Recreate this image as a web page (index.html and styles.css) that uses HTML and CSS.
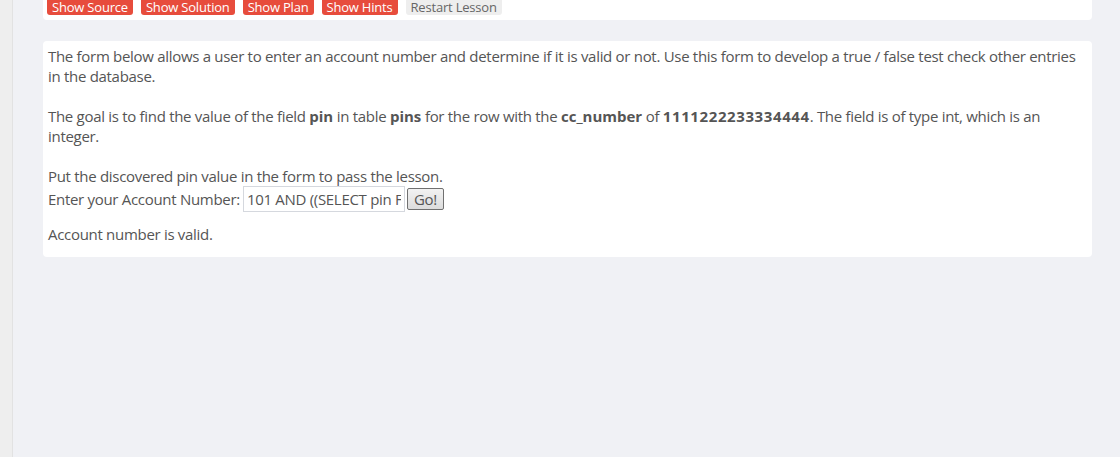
FILE: index.html
```html
<!DOCTYPE html>
<html>
<head>
<meta charset="utf-8">
<link rel="stylesheet" href="styles.css">
</head>
<body>
<div class="layout">
  <aside class="sidebar"></aside>
  <main class="main">
    <div class="card toolbar">
      <span class="btn btn-red">Show Source</span>
      <span class="btn btn-red">Show Solution</span>
      <span class="btn btn-red">Show Plan</span>
      <span class="btn btn-red">Show Hints</span>
      <span class="btn btn-gray">Restart Lesson</span>
    </div>
    <div class="card lesson">
      <p>The form below allows a user to enter an account number and determine if it is valid or not. Use this form to develop a true / false test check other entries in the database.</p>
      <p>The goal is to find the value of the field <b>pin</b> in table <b>pins</b> for the row with the <b>cc_number</b> of <b class="num">1111222233334444</b>. The field is of type int, which is an integer.</p>
      <p class="tight">Put the discovered pin value in the form to pass the lesson.</p>
      <form class="form-row">
        <label>Enter your Account Number:</label>
        <input class="acct" type="text" value="101 AND ((SELECT pin FROM pins WHERE cc_number='1111222233334444') &gt; 1000)">
        <button type="button" class="go">Go!</button>
      </form>
      <p class="result">Account number is valid.</p>
    </div>
  </main>
</div>
</body>
</html>
```

FILE: styles.css
```css
* { box-sizing: border-box; }
html, body {
  margin: 0;
  padding: 0;
  height: 100%;
}
body {
  background: #f0f1f5;
  font-family: "Open Sans", "Liberation Sans", sans-serif;
  color: #555;
  font-size: 15px;
  line-height: 20px;
  letter-spacing: -0.3px;
  overflow: hidden;
}
.layout {
  display: flex;
  height: 457px;
}
.sidebar {
  width: 13px;
  background: #eeeeee;
  border-right: 1px solid #e2e2e2;
  flex: none;
}
.main {
  flex: 1;
  padding: 0 28px 0 30px;
}
.card {
  background: #fff;
  border-radius: 0 0 4px 4px;
}
.toolbar {
  height: 20px;
  display: flex;
  align-items: flex-start;
  gap: 8px;
  padding: 0 4px;
}
.btn {
  font-size: 13px;
  line-height: 14px;
  height: 15px;
  padding: 0 5px;
  letter-spacing: -0.2px;
  border-radius: 0 0 3px 3px;
  white-space: nowrap;
}
.btn-red {
  background: #e74c3c;
  color: #fff;
}
.btn-gray {
  background: #eeeeee;
  color: #666;
}
.lesson {
  margin-top: 21px;
  border-radius: 4px;
  padding: 5px 5px 13px 5px;
}
.lesson p {
  margin: 0 0 20px 0;
}
.lesson p.tight {
  margin: 0;
}
.lesson b {
  font-weight: 700;
  letter-spacing: 0;
}
.lesson b.num {
  letter-spacing: 0.6px;
}
.form-row {
  display: flex;
  align-items: center;
  height: 26px;
  margin: 0;
}
.form-row label {
  margin-right: 3px;
}
.acct {
  width: 162px;
  height: 26px;
  border: 1px solid #d5d8de;
  padding: 0 3px;
  font-family: inherit;
  font-size: 15px;
  letter-spacing: -0.3px;
  color: #555;
  margin: 0 2px 0 0;
}
.go {
  height: 22px;
  font-family: inherit;
  font-size: 15px;
  line-height: 18px;
  letter-spacing: -0.3px;
  color: #555;
  padding: 0 6px;
  border: 1px solid #707070;
  border-radius: 2px;
  background: linear-gradient(#f2f2f2, #dcdcdc);
  margin: 0;
}
.lesson p.result {
  margin: 12px 0 0 0;
}
```
